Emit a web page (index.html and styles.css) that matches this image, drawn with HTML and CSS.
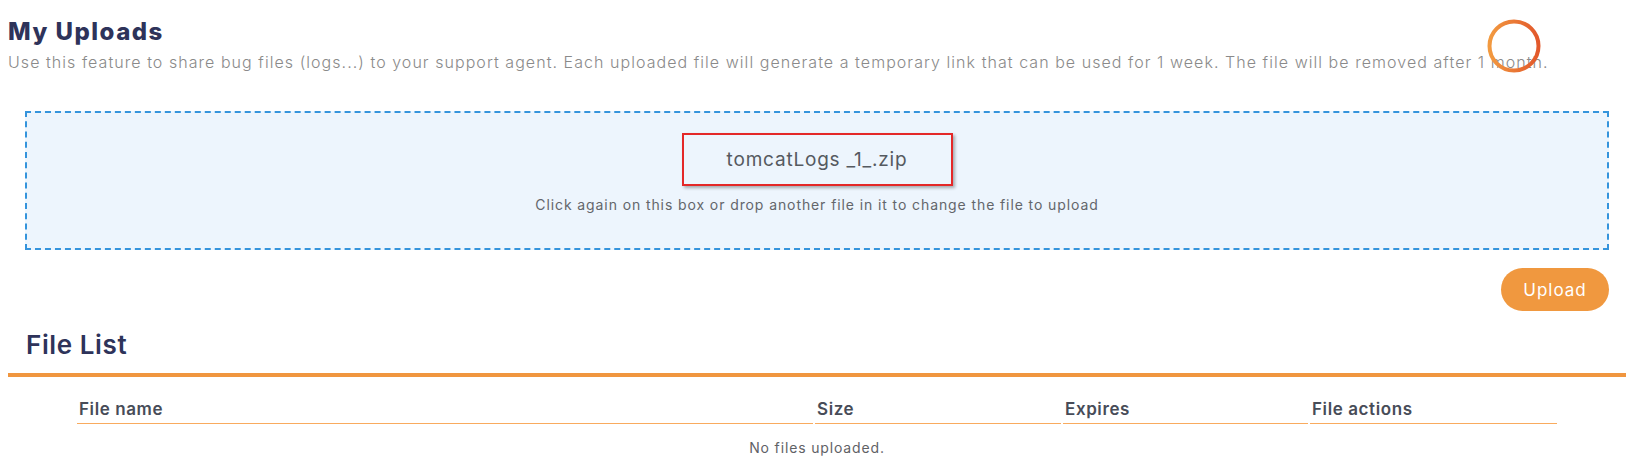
FILE: index.html
```html
<!DOCTYPE html>
<html lang="en">
<head>
<meta charset="utf-8">
<title>My Uploads</title>
<link rel="stylesheet" href="styles.css">
</head>
<body>
<div class="page">
  <header class="intro">
    <h1 class="title">My Uploads</h1>
    <p class="desc">Use this feature to share bug files (logs...) to your support agent. Each uploaded file will generate a temporary link that can be used for 1 week. The file will be removed after 1 month.</p>
    <svg class="spinner" width="54" height="54" viewBox="0 0 54 54" aria-hidden="true">
      <defs>
        <linearGradient id="ring" x1="0" y1="0" x2="1" y2="0">
          <stop offset="0" stop-color="#f29a40"/>
          <stop offset="1" stop-color="#e2582b"/>
        </linearGradient>
      </defs>
      <circle cx="27" cy="27" r="24.5" fill="none" stroke="url(#ring)" stroke-width="4"/>
    </svg>
  </header>

  <section class="upload">
    <div class="dropzone">
      <div class="filename">tomcatLogs _1_.zip</div>
      <div class="hint">Click again on this box or drop another file in it to change the file to upload</div>
    </div>
    <div class="actions">
      <button class="btn-upload" type="button">Upload</button>
    </div>
  </section>

  <section class="files">
    <div class="list-header">
      <h2 class="list-title">File List</h2>
    </div>
    <table class="file-table">
      <colgroup>
        <col class="col-name">
        <col class="col-size">
        <col class="col-exp">
        <col class="col-act">
      </colgroup>
      <thead>
        <tr>
          <th>File name</th>
          <th>Size</th>
          <th>Expires</th>
          <th>File actions</th>
        </tr>
      </thead>
      <tbody>
        <tr>
          <td class="empty" colspan="4">No files uploaded.</td>
        </tr>
      </tbody>
    </table>
  </section>
</div>
</body>
</html>
```

FILE: styles.css
```css
* { box-sizing: border-box; }

body {
  margin: 0;
  font-family: Inter, "Open Sans", "DejaVu Sans", sans-serif;
  background: #ffffff;
}

.page {
  margin: 0 3px 0 8px;
}

.intro {
  position: relative;
  padding-top: 17px;
}

.title {
  margin: 0;
  font-size: 24px;
  line-height: 30px;
  font-weight: 800;
  letter-spacing: 1.5px;
  color: #2e335a;
}

.desc {
  margin: 5px 0 0;
  font-size: 16px;
  line-height: 20px;
  font-weight: 300;
  letter-spacing: 1.05px;
  color: #8a8a8a;
  white-space: nowrap;
}

.spinner {
  position: absolute;
  left: 1479px;
  top: 19px;
}

.upload {
  padding: 0 17px;
  margin-top: 39px;
}

.dropzone {
  height: 139px;
  border: 2px dashed #3594dc;
  background: #edf5fd;
  display: flex;
  flex-direction: column;
  align-items: center;
  padding-top: 20px;
}

.filename {
  width: 271px;
  height: 53px;
  border: 2px solid #e42828;
  box-shadow: 2px 2px 3px rgba(0, 0, 0, 0.3);
  display: flex;
  align-items: center;
  justify-content: center;
  font-size: 19px;
  letter-spacing: 0.8px;
  color: #555a60;
}

.hint {
  margin-top: 9px;
  font-size: 14px;
  line-height: 20px;
  letter-spacing: 0.9px;
  color: #63666b;
}

.actions {
  display: flex;
  justify-content: flex-end;
  margin-top: 18px;
}

.btn-upload {
  width: 108px;
  height: 43px;
  border: none;
  border-radius: 22px;
  background: #f0983f;
  color: #ffffff;
  font-family: inherit;
  font-size: 17px;
  letter-spacing: 1px;
  padding: 0;
}

.files {
  margin-top: 18px;
}

.list-header {
  padding: 0 18px 12px;
  border-bottom: 4px solid #f0963f;
}

.list-title {
  margin: 0;
  font-size: 26px;
  line-height: 32px;
  font-weight: 600;
  letter-spacing: 0.6px;
  color: #2e335a;
}

.file-table {
  width: 1484px;
  margin: 16px auto 0;
  table-layout: fixed;
  border-collapse: separate;
  border-spacing: 2px 0;
}

.col-name { width: 736px; }
.col-size { width: 246px; }
.col-exp { width: 245px; }
.col-act { width: 247px; }

.file-table th {
  text-align: left;
  padding: 6px 2px 4px;
  font-size: 17px;
  line-height: 20px;
  font-weight: 600;
  letter-spacing: 0.6px;
  color: #474c58;
  border-bottom: 1px solid #f9ab5e;
}

.file-table .empty {
  text-align: center;
  padding-top: 14px;
  font-size: 14px;
  line-height: 20px;
  letter-spacing: 0.85px;
  color: #5f6266;
}
```
